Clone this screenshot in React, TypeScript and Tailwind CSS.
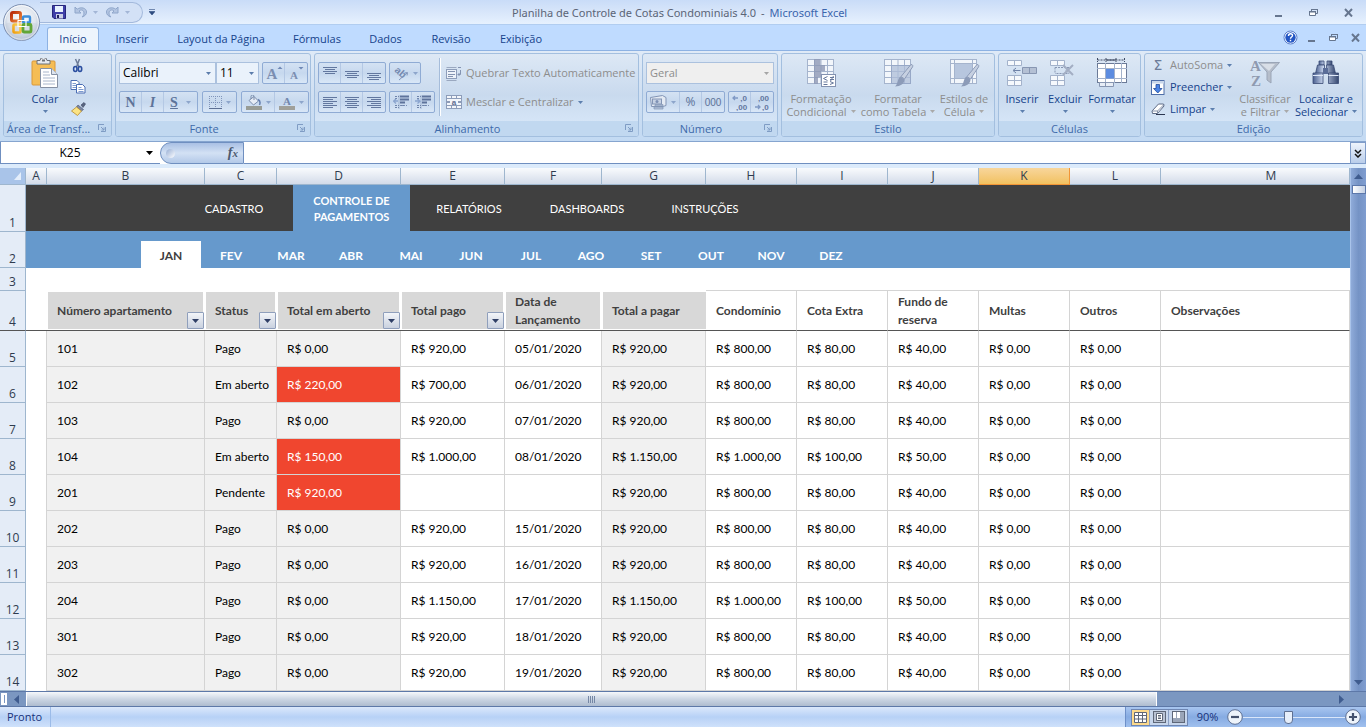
import { useState, type ReactNode } from "react";
import clsx from "clsx";

type Row = {
  apto: string;
  status: string;
  aberto: string;
  pago: string;
  data: string;
  total: string;
  condominio: string;
  extra: string;
  reserva: string;
};

const rows: Row[] = [
  { apto: "101", status: "Pago", aberto: "R$ 0,00", pago: "R$ 920,00", data: "05/01/2020", total: "R$ 920,00", condominio: "R$ 800,00", extra: "R$ 80,00", reserva: "R$ 40,00" },
  { apto: "102", status: "Em aberto", aberto: "R$ 220,00", pago: "R$ 700,00", data: "06/01/2020", total: "R$ 920,00", condominio: "R$ 800,00", extra: "R$ 80,00", reserva: "R$ 40,00" },
  { apto: "103", status: "Pago", aberto: "R$ 0,00", pago: "R$ 920,00", data: "07/01/2020", total: "R$ 920,00", condominio: "R$ 800,00", extra: "R$ 80,00", reserva: "R$ 40,00" },
  { apto: "104", status: "Em aberto", aberto: "R$ 150,00", pago: "R$ 1.000,00", data: "08/01/2020", total: "R$ 1.150,00", condominio: "R$ 1.000,00", extra: "R$ 100,00", reserva: "R$ 50,00" },
  { apto: "201", status: "Pendente", aberto: "R$ 920,00", pago: "", data: "", total: "R$ 920,00", condominio: "R$ 800,00", extra: "R$ 80,00", reserva: "R$ 40,00" },
  { apto: "202", status: "Pago", aberto: "R$ 0,00", pago: "R$ 920,00", data: "15/01/2020", total: "R$ 920,00", condominio: "R$ 800,00", extra: "R$ 80,00", reserva: "R$ 40,00" },
  { apto: "203", status: "Pago", aberto: "R$ 0,00", pago: "R$ 920,00", data: "16/01/2020", total: "R$ 920,00", condominio: "R$ 800,00", extra: "R$ 80,00", reserva: "R$ 40,00" },
  { apto: "204", status: "Pago", aberto: "R$ 0,00", pago: "R$ 1.150,00", data: "17/01/2020", total: "R$ 1.150,00", condominio: "R$ 1.000,00", extra: "R$ 100,00", reserva: "R$ 50,00" },
  { apto: "301", status: "Pago", aberto: "R$ 0,00", pago: "R$ 920,00", data: "18/01/2020", total: "R$ 920,00", condominio: "R$ 800,00", extra: "R$ 80,00", reserva: "R$ 40,00" },
  { apto: "302", status: "Pago", aberto: "R$ 0,00", pago: "R$ 920,00", data: "19/01/2020", total: "R$ 920,00", condominio: "R$ 800,00", extra: "R$ 80,00", reserva: "R$ 40,00" },
];

const columns = [
  { letter: "A", width: "w-[21px]" },
  { letter: "B", width: "w-[158px]" },
  { letter: "C", width: "w-[72px]" },
  { letter: "D", width: "w-[124px]" },
  { letter: "E", width: "w-[104px]" },
  { letter: "F", width: "w-[97px]" },
  { letter: "G", width: "w-[104px]" },
  { letter: "H", width: "w-[91px]" },
  { letter: "I", width: "w-[91px]" },
  { letter: "J", width: "w-[91px]" },
  { letter: "K", width: "w-[91px]" },
  { letter: "L", width: "w-[91px]" },
  { letter: "M", width: "" },
];

const headers = [
  { label: "Número apartamento", gray: true, filter: true },
  { label: "Status", gray: true, filter: true },
  { label: "Total em aberto", gray: true, filter: true },
  { label: "Total pago", gray: true, filter: true },
  { label: "Data de Lançamento", gray: true },
  { label: "Total a pagar", gray: true, last: true },
  { label: "Condomínio" },
  { label: "Cota Extra" },
  { label: "Fundo de reserva" },
  { label: "Multas" },
  { label: "Outros" },
  { label: "Observações" },
];

const tabs = [
  { label: "Início", width: "w-[52px]" },
  { label: "Inserir", width: "w-[66px]" },
  { label: "Layout da Página", width: "w-[112px]" },
  { label: "Fórmulas", width: "w-[80px]" },
  { label: "Dados", width: "w-[57px]" },
  { label: "Revisão", width: "w-[74px]" },
  { label: "Exibição", width: "w-[66px]" },
];
const sections = ["CADASTRO", "CONTROLE DE PAGAMENTOS", "RELATÓRIOS", "DASHBOARDS", "INSTRUÇÕES"];
const months = ["JAN", "FEV", "MAR", "ABR", "MAI", "JUN", "JUL", "AGO", "SET", "OUT", "NOV", "DEZ"];

/* ---------- icons ---------- */

function Caret({ className = "text-[#5d7fae]" }: { className?: string }) {
  return (
    <svg width="5" height="3" viewBox="0 0 5 3" className={clsx("shrink-0", className)}>
      <path d="M0 0h5L2.5 3z" fill="currentColor" />
    </svg>
  );
}

function OfficeLogo() {
  return (
    <svg width="39" height="39" viewBox="0 0 39 39">
      <defs>
        <radialGradient id="orb" cx="50%" cy="40%" r="60%">
          <stop offset="0" stopColor="#ffffff" />
          <stop offset="0.65" stopColor="#dfe5ee" />
          <stop offset="1" stopColor="#9fb0ca" />
        </radialGradient>
        <linearGradient id="lred" x1="0" y1="0" x2="1" y2="1">
          <stop offset="0" stopColor="#b8290a" />
          <stop offset="1" stopColor="#f08a3a" />
        </linearGradient>
        <linearGradient id="lyellow" x1="0" y1="1" x2="1" y2="0">
          <stop offset="0" stopColor="#f0a010" />
          <stop offset="1" stopColor="#fbd75c" />
        </linearGradient>
      </defs>
      <circle cx="19.5" cy="19.5" r="18" fill="url(#orb)" stroke="#7d90b2" />
      <circle cx="19.5" cy="19.5" r="16.8" fill="none" stroke="#fff" strokeOpacity=".8" />
      <path d="M3 21c8-3 24-3 33 0a16.500 16.500 0 0 1-33 0z" fill="#c9d1de" opacity=".5" />
      <g fill="none" strokeLinejoin="round">
        <rect x="9.500" y="9.500" width="9" height="8.500" rx="1.500" stroke="url(#lred)" strokeWidth="3" />
        <rect x="21" y="13.500" width="7" height="6" rx="1" stroke="#3c8edb" strokeWidth="2.400" />
        <rect x="11.500" y="21.500" width="7" height="8" rx="1" stroke="url(#lyellow)" strokeWidth="2.600" />
        <rect x="21" y="21.500" width="8" height="7.500" rx="1" stroke="#62a637" strokeWidth="2.800" />
        <path d="M16 17.500h8v6h-8z" stroke="#fff" strokeWidth="1.200" />
      </g>
    </svg>
  );
}

function SaveIcon() {
  return (
    <svg width="14" height="14" viewBox="0 0 14 14">
      <path d="M.5.500h13v13H2L.500 12z" fill="#3f3fa8" stroke="#26267c" />
      <rect x="3" y="1" width="8" height="6" fill="#e8f2ff" />
      <rect x="4" y="9" width="7" height="4.500" fill="#c9cfe6" />
      <rect x="5" y="10" width="2" height="3" fill="#20205c" />
    </svg>
  );
}

function UndoIcon({ flip }: { flip?: boolean }) {
  return (
    <svg width="13" height="12" viewBox="0 0 13 12" className={clsx(flip && "-scale-x-100")}>
      <path d="M1 1v6h6L5 5c2-2 5-1 5 2 0 2-1 3-2 4 3-1 4.500-2.500 4.500-5C12.500 2 7 .500 3.200 3.200z" fill="#b3c5e2" stroke="#8fa6ca" />
    </svg>
  );
}

function MinimizeIcon() {
  return (
    <svg width="9" height="9" viewBox="0 0 9 9">
      <path d="M1 7h7v2H1z" fill="#66768f" />
    </svg>
  );
}

function RestoreIcon() {
  return (
    <svg width="9" height="9" viewBox="0 0 9 9">
      <path d="M2.500 3V1.500h6v4H7" fill="none" stroke="#66768f" />
      <path d="M.500 3.500h6v4h-6z" fill="#fff" stroke="#66768f" />
      <path d="M0 3h7v1.500H0zM2 1h7v1H2z" fill="#66768f" />
    </svg>
  );
}

function CloseIcon() {
  return (
    <svg width="9" height="9" viewBox="0 0 9 9">
      <path d="M1 1l7 7.500M8 1L1 8.500" stroke="#66768f" strokeWidth="2" />
    </svg>
  );
}

function HelpIcon() {
  return (
    <svg width="15" height="15" viewBox="0 0 15 15">
      <circle cx="7.500" cy="7.500" r="6.500" fill="#fff" stroke="#5b7fcb" />
      <circle cx="7.500" cy="7.500" r="5.200" fill="#2356c4" />
      <path d="M5.500 6c0-3 4-3 4-.500 0 1.500-2 1.500-2 3.200M7.500 9.800v1.400" fill="none" stroke="#fff" strokeWidth="1.400" />
    </svg>
  );
}

function PasteIcon() {
  return (
    <svg width="28" height="30" viewBox="0 0 28 30">
      <rect x="1" y="3" width="23" height="24" rx="1" fill="#f5bd55" stroke="#d9983a" />
      <path d="M6 2.500h3a3.500 3 0 0 1 7 0h3v3.500H6z" fill="#e6e9ee" stroke="#6b7078" />
      <rect x="11" y="1.500" width="3" height="2" fill="#6b7078" />
      <path d="M9.500 10.500h11l6 6v13h-17z" fill="#fff" stroke="#8590a3" />
      <path d="M20.500 10.500v6h6" fill="#dde4ee" stroke="#8590a3" />
      <path d="M12 14h6M12 17h7M12 20h12M12 23h12M12 26h12" stroke="#a9b6cb" />
    </svg>
  );
}

function CutIcon() {
  return (
    <svg width="12" height="15" viewBox="0 0 12 15">
      <path d="M3.500 1l3.500 8M7.500 1L4.500 9" stroke="#6d7c98" strokeWidth="1.500" />
      <ellipse cx="3.300" cy="11" rx="1.700" ry="2.500" fill="none" stroke="#2b4fa0" strokeWidth="1.600" />
      <ellipse cx="8" cy="11" rx="1.700" ry="2.500" fill="none" stroke="#2b4fa0" strokeWidth="1.600" />
    </svg>
  );
}

function CopyIcon() {
  return (
    <svg width="16" height="14" viewBox="0 0 16 14">
      <path d="M1 .500h6l2 2v7H1z" fill="#fff" stroke="#4a6db3" />
      <path d="M2.500 3.500H6M2.500 5.500H6M2.500 7.500H6" stroke="#7d9bd0" />
      <path d="M6.500 4.500h6l2.500 2.500v6H6.500z" fill="#fff" stroke="#4a6db3" />
      <path d="M8.500 7.500h3M8.500 9.500h5M8.500 11.500h5" stroke="#7d9bd0" />
    </svg>
  );
}

function BrushIcon() {
  return (
    <svg width="15" height="14" viewBox="0 0 15 14">
      <path d="M10 3l3-2.500 1.500 1.500L12 5.500z" fill="#5a6680" stroke="#394461" strokeWidth=".6" />
      <path d="M7 3l5.500 4.500-2 1.500L5.500 5z" fill="#7b87a5" stroke="#46506b" strokeWidth=".6" />
      <path d="M5.500 5l5 4-4 4.500L.500 9z" fill="#fbe384" stroke="#b88a2a" strokeWidth=".8" />
    </svg>
  );
}

type AlignKind = "top" | "middle" | "bottom" | "left" | "center" | "right";

const alignPaths: Record<AlignKind, string> = {
  top: "M0 .5h14M2 2.500h10M0 4.500h14M2 6.500h10",
  middle: "M0 4.500h14M2 6.500h10M0 8.500h14M2 10.500h10",
  bottom: "M0 6.500h14M2 8.500h10M0 10.500h14M2 12.500h10",
  left: "M0 1.500h14M0 3.500h10M0 5.500h14M0 7.500h10M0 9.500h14M0 11.500h10",
  center: "M0 1.500h14M2 3.500h10M0 5.500h14M2 7.500h10M0 9.500h14M2 11.500h10",
  right: "M0 1.500h14M4 3.500h10M0 5.500h14M4 7.500h10M0 9.500h14M4 11.500h10",
};

function AlignIcon({ kind }: { kind: AlignKind }) {
  return (
    <svg width="14" height="13" viewBox="0 0 14 13">
      <path d={alignPaths[kind]} stroke="#62779f" />
    </svg>
  );
}

function IndentIcon({ more }: { more?: boolean }) {
  return (
    <svg width="16" height="14" viewBox="0 0 16 14">
      <path d="M2 1.500h4M2 10.500h4M2 12.500h4M7 10.500h4M2 3.500h2" stroke="#6f84aa" strokeDasharray="2 1" />
      <path d="M7 1.500h9M7 4.500h9M7 7.500h5" stroke="#5e739b" strokeWidth="2" />
      <path d="M7 10.500h7M6 .500v13" stroke="#7a8eb3" strokeDasharray="1 1" />
      <path d={more ? "M0 6h4M2.500 4l2.500 2.200L2.500 8.500" : "M1 6h4M3 4L.500 6.200 3 8.500"} stroke="#8ba5cf" fill="none" strokeWidth="1.300" />
    </svg>
  );
}

function OrientationIcon() {
  return (
    <svg width="16" height="16" viewBox="0 0 16 16">
      <text x="0" y="0" transform="translate(1 6) rotate(42)" fontSize="10" fontWeight="bold" fontFamily="Liberation Sans" fill="#7288af">ab</text>
      <path d="M6 15l8-7M14.500 7.500L14 10.500M14.500 7.500L11.500 8" stroke="#7f95bb" fill="none" />
    </svg>
  );
}

function WrapIcon() {
  return (
    <svg width="16" height="15" viewBox="0 0 16 15">
      <path d="M.500 1.500h10M.500 14.500h10" stroke="#9aa8c0" />
      <rect x=".5" y="3.500" width="10" height="9" fill="#eef3fa" stroke="#8d9dba" />
      <path d="M2 5.500h7M2 8.500h7M2 10.500h5" stroke="#8393b1" />
      <path d="M12 1.500h3M14.500 4v4.500H12M13.500 7L12 8.500l1.500 1.500" stroke="#8393b1" fill="none" />
    </svg>
  );
}

function MergeIcon() {
  return (
    <svg width="16" height="14" viewBox="0 0 16 14">
      <rect x=".5" y=".5" width="15" height="13" fill="#f3f6fb" stroke="#8d9dba" />
      <path d="M0 3.500h16M0 10.500h16M5.500 0v3.500M10.500 0v3.500M5.500 10.500V14M10.500 10.500V14" stroke="#8d9dba" />
      <path d="M1 7h3M15 7h-3" stroke="#6d7fa2" strokeWidth="1.500" />
      <text x="8" y="9.500" textAnchor="middle" fontSize="8" fontWeight="bold" fontFamily="Liberation Sans" fill="#5f6f90">a</text>
    </svg>
  );
}

function BorderIcon() {
  return (
    <svg width="13" height="13" viewBox="0 0 13 13">
      <path d="M0 .5h13M0 6.500h13M.500 0v12M6.500 0v12M12.500 0v12" stroke="#8095bb" strokeDasharray="1 1" />
      <path d="M0 12.500h13" stroke="#5c6f94" />
    </svg>
  );
}

function FillIcon() {
  return (
    <svg width="16" height="15" viewBox="0 0 16 15">
      <path d="M3 5.500l5-4 4.500 4.500-5 4z" fill="#e6ecf5" stroke="#7a8cab" />
      <path d="M8 5V1.500a1.500 1.500 0 0 0-3 0V4" fill="none" stroke="#7a8cab" />
      <path d="M12 4.500c2 1 2.500 3 1.500 5.500" stroke="#6580b0" strokeWidth="1.500" fill="none" />
      <rect y="11" width="16" height="4" fill="#989c96" />
    </svg>
  );
}

function FontColorIcon() {
  return (
    <svg width="16" height="15" viewBox="0 0 16 15">
      <text x="8" y="10" textAnchor="middle" fontSize="11" fontWeight="bold" fontFamily="Liberation Serif" fill="#7287ad">A</text>
      <rect y="11" width="16" height="4" fill="#a0a09a" />
    </svg>
  );
}

function FontSizeIcon({ grow }: { grow?: boolean }) {
  return (
    <svg width="18" height="20" viewBox="0 0 18 20">
      <text x="7" y="16" textAnchor="middle" fontSize={grow ? 15 : 11} fontWeight="bold" fontFamily="Liberation Serif" fill="#7b8eb1">A</text>
      <path d={grow ? "M12.500 6h5L15 3.500z" : "M11.500 4h5L14 6.500z"} fill="#7089b6" />
    </svg>
  );
}

function MoneyIcon() {
  return (
    <svg width="17" height="15" viewBox="0 0 17 15">
      <path d="M.500 2.500l12-2 3.500 2v8l-3 1H1.500z" fill="#e4eaf3" stroke="#8395b5" />
      <rect x="2.500" y="4" width="9" height="5" fill="#c6d1e3" stroke="#8395b5" />
      <circle cx="7" cy="6.500" r="1.500" fill="#7d90b4" />
      <path d="M5 9.500h8v1.500H5zM4 12h9v2H4z" fill="#b4c2d9" stroke="#8395b5" strokeWidth=".7" />
    </svg>
  );
}

function DecimalIcon({ more }: { more?: boolean }) {
  return (
    <svg width="18" height="18" viewBox="0 0 18 18" fontFamily="Liberation Sans" fontSize="8" fontWeight="bold" fill="#62779f">
      <text x="16" y="8" textAnchor="end">{more ? ",0" : ",00"}</text>
      <text x={more ? 5 : 9} y="17">{more ? ",00" : ",0"}</text>
      <path d={more ? "M7 5H2M4 3L2 5l2 2" : "M2 14h5M5 12l2 2-2 2"} stroke="#7f98c4" fill="none" strokeWidth="1.300" />
    </svg>
  );
}

function GridIcon({ kind }: { kind: "conditional" | "table" | "style" }) {
  return (
    <svg width="32" height="30" viewBox="0 0 32 30">
      <rect x="2.500" y="1.500" width="26" height="24" fill="#f2f6fb" stroke="#a5b4cd" />
      {kind !== "style" && (
        <path d="M2 7.500h27M2 13.500h27M2 19.500h27M9.500 1v25M16 1v25M22.500 1v25" stroke="#a5b4cd" />
      )}
      {kind === "conditional" && (
        <>
          <path d="M9 1h6.500v6H20v6h-4v6h-3v7H9z" fill="#8d99b5" opacity=".8" />
          <rect x="16.500" y="16.500" width="14" height="12" fill="#fff" stroke="#8392b0" />
          <path d="M22.500 18.500l-4 2 4 2M18.500 24h4M18.500 26.500h4M25 19.500h4M25 21.500h4M28.500 18l-3 5M25 23.500l3.500 1.500-3.500 1.500" stroke="#66789c" fill="none" />
        </>
      )}
      {kind === "table" && <rect x="9.500" y="7.500" width="19" height="18" fill="#adbdd8" stroke="#93a5c5" opacity=".75" />}
      {kind === "style" && (
        <>
          <path d="M2 5.500h27M2 20.500h27M6.500 1v25M24.500 1v25" stroke="#a5b4cd" />
          <rect x="7" y="6" width="17" height="14" fill="#b7c6de" />
        </>
      )}
      {kind !== "conditional" && (
        <>
          <path d="M29 6.500c2 0 2 1.500 1.500 2.500L22.500 21 19 18.500z" fill="#c6d0e1" stroke="#8d9cb9" />
          <path d="M18.500 18.500l4 3c0 4-4 7-9.500 7 3-2 2.500-8.500 5.500-10z" fill="#8c9bb8" />
        </>
      )}
    </svg>
  );
}

function CellsIcon({ kind }: { kind: "insert" | "delete" }) {
  return (
    <svg width="32" height="30" viewBox="0 0 32 30">
      <path d="M1.500 2.500h14v5h-14zM8.500 2.500v5M1.500 17.500h14v10h-14zM1.500 22.500h14M8.500 17.500v10" fill="#f6f9fd" stroke="#a3b2cb" />
      {kind === "insert" ? (
        <>
          <path d="M16.500 9.500h14v6h-14zM23.500 9.500v6" fill="#b4c0d4" stroke="#8796b2" />
          <path d="M14.500 12.500h-7M10 10l-3 2.500 3 2.500" stroke="#6f83a8" fill="none" />
        </>
      ) : (
        <>
          <path d="M6 9.500h14l-3 3 3 3H6M6 9.500v6" stroke="#8796b2" fill="none" strokeDasharray="2 1" />
          <path d="M14 7l10 10M24 7L14 17" stroke="#a3aec3" strokeWidth="2" />
        </>
      )}
    </svg>
  );
}

function FormatIcon() {
  return (
    <svg width="32" height="30" viewBox="0 0 32 30">
      <path d="M1.500 0v4M28.500 0v4M1.500 2h27M10 0v4M20 0v4" stroke="#3e4a63" strokeDasharray="2 1" />
      <path d="M10 2h10" stroke="#3e4a63" />
      <rect x="1.500" y="5.500" width="29" height="19" fill="#fff" stroke="#6b7a97" />
      <path d="M1 10.500h30M1 20.500h30M9.500 5v20M18.500 5v20M25.500 5v20" stroke="#a3b2cb" />
      <path d="M3.500 24.500h14v4h-14zM9.500 24.500v4" fill="#e8eef7" stroke="#8796b2" />
      <rect x="10" y="11" width="8" height="9.500" fill="#5c8ce0" />
    </svg>
  );
}

function FillDownIcon() {
  return (
    <svg width="14" height="15" viewBox="0 0 14 15">
      <rect x=".5" y=".5" width="12.500" height="14" fill="#fff" stroke="#4e6ea8" />
      <rect x="1" y="1" width="12" height="2.500" fill="#c8d6ea" />
      <path d="M5 4.500h3.500v4H11l-4.200 4.500L2.500 8.500H5z" fill="#4a83e4" stroke="#214c9e" strokeWidth=".8" />
    </svg>
  );
}

function EraserIcon() {
  return (
    <svg width="14" height="12" viewBox="0 0 14 12">
      <path d="M1 8l6.500-7h5L13 3l-6.500 7.500h-5z" fill="#fff" stroke="#5c6a85" />
      <path d="M1 8h5.500L13 1.500M6.500 8v2.500" fill="none" stroke="#8592aa" />
      <path d="M5 11.500h9" stroke="#2c3650" />
    </svg>
  );
}

function SortFilterIcon() {
  return (
    <svg width="32" height="30" viewBox="0 0 32 30">
      <path d="M9.500 4.500h21L22 14v11l-4-3v-8z" fill="#b5bdca" stroke="#9aa5b7" />
      <path d="M12 6h14l-6 7z" fill="#d8dee7" />
      <text x="1" y="13" fontFamily="Liberation Serif" fontSize="15" fontWeight="bold" fill="#8f9ab0">A</text>
      <text x="2" y="28" fontFamily="Liberation Serif" fontSize="15" fontWeight="bold" fill="#8f9ab0">Z</text>
    </svg>
  );
}

function BinocularsIcon() {
  return (
    <svg width="32" height="30" viewBox="0 0 32 30">
      <defs>
        <linearGradient id="bino" x1="0" x2="1" y1="0" y2="0">
          <stop offset="0" stopColor="#4a5f8f" />
          <stop offset=".4" stopColor="#c9d6ee" />
          <stop offset="1" stopColor="#34466f" />
        </linearGradient>
      </defs>
      <g stroke="#384a74" strokeWidth=".8" fill="url(#bino)">
        <path d="M9 3h5v4H9zM17 3h5v4h-5z" />
        <path d="M7.500 7h7v8.500h-9zM16.500 7h7l2 8.500h-9z" />
        <path d="M3 15h10v10.500H3zM18.500 15h10v10.500h-10z" />
      </g>
      <rect x="13" y="10" width="5" height="6" fill="#5a6d98" />
      <path d="M3 17.500h10M18.500 17.500h10" stroke="#dfe8f8" />
    </svg>
  );
}

function Launcher() {
  return (
    <svg width="8" height="8" viewBox="0 0 8 8">
      <path d="M.5 6V.500H6M7.500 3v4.500H3M3 3l3 3M6 3.500V6H3.500" fill="none" stroke="#7f9cc4" />
    </svg>
  );
}

/* ---------- ribbon parts ---------- */

function Group({ title, width, launcher, children }: { title: string; width: string; launcher?: boolean; children: ReactNode }) {
  return (
    <section
      aria-label={title}
      className={clsx(
        "flex h-[84px] shrink-0 flex-col overflow-hidden rounded-[3px] border border-[#a3bfdf] bg-linear-to-b from-[#dde8f5] via-[#c9daee] to-[#dcebfb]",
        width,
      )}
    >
      <div className="flex h-[67px] items-start">{children}</div>
      <div
        className={clsx(
          "relative flex h-[15px] items-center justify-center whitespace-nowrap bg-[#c1d8f0] leading-[15px] text-[#3e6aaa]",
          launcher && "pr-[18px]",
        )}
      >
        <span>{title}</span>
        {launcher && (
          <button aria-label={`Opções de ${title}`} className="absolute right-[5px] top-[3px]">
            <Launcher />
          </button>
        )}
      </div>
    </section>
  );
}

function ButtonSet({ children }: { children: ReactNode }) {
  return (
    <div className="flex h-[22px] divide-x divide-[#b4c8e4] rounded-[2px] border border-[#8fabd4] bg-linear-to-b from-[#d4e2f3] via-[#c6d8ee] to-[#d9e7f7]">
      {children}
    </div>
  );
}

function IconButton({ label, width = "w-[22px]", caret, children }: { label: string; width?: string; caret?: boolean; children: ReactNode }) {
  return (
    <button aria-label={label} className={clsx("flex items-center justify-center gap-1", width)}>
      {children}
      {caret && <Caret className="text-[#8da5cb]" />}
    </button>
  );
}

function Combo({ label, value, width, disabled }: { label: string; value: string; width: string; disabled?: boolean }) {
  return (
    <div className={clsx("relative h-[22px]", width)}>
      <select
        aria-label={label}
        disabled={disabled}
        className={clsx(
          "h-full w-full appearance-none border border-[#abc1de] pl-[3px]",
          disabled ? "bg-[#efefef] text-[11px] text-[#8d8d8d] opacity-100" : "bg-[#eaf2fb] text-[12px] text-black",
        )}
      >
        <option>{value}</option>
      </select>
      <Caret className={clsx("pointer-events-none absolute right-[5px] top-[10px]", disabled ? "text-[#a5a5a5]" : "text-[#5b7cab]")} />
    </div>
  );
}

function BigButton({ icon, lines, width, disabled }: { icon: ReactNode; lines: string[]; width: string; disabled?: boolean }) {
  return (
    <button
      className={clsx("flex h-[67px] shrink-0 flex-col items-center whitespace-nowrap pt-1 leading-[13px]", width, disabled ? "text-[#8d8d8d]" : "text-[#15428b]")}
    >
      {icon}
      <span className="mt-1">{lines[0]}</span>
      <span className="flex h-[13px] items-center gap-1">
        {lines[1]}
        <Caret className={disabled ? "text-[#a9a9a9]" : undefined} />
      </span>
    </button>
  );
}

function SmallButton({ icon, label, disabled, caret = true }: { icon: ReactNode; label: string; disabled?: boolean; caret?: boolean }) {
  return (
    <button className={clsx("flex h-[22px] items-center gap-1 whitespace-nowrap", disabled ? "text-[#8d8d8d]" : "text-[#15428b]")}>
      <span className="flex w-4 justify-center">{icon}</span>
      {label}
      {caret && <Caret />}
    </button>
  );
}

function Ribbon() {
  return (
    <div className="flex h-[92px] gap-[3px] overflow-hidden border-b border-t border-b-[#86a5cf] border-t-[#8db2e3] bg-linear-to-b from-[#dfeaf7] via-[#cfdff2] to-[#c3daf3] px-[3px] pt-[2px]">
      <Group title="Área de Transf..." width="w-[109px]" launcher>
        <div className="flex pl-4">
          <BigButton width="w-[50px]" icon={<PasteIcon />} lines={["Colar", ""]} />
          <div className="flex flex-col">
            <button aria-label="Recortar" className="flex h-[22px] w-4 items-center justify-center"><CutIcon /></button>
            <button aria-label="Copiar" className="flex h-[22px] w-4 items-center justify-center"><CopyIcon /></button>
            <button aria-label="Pincel" className="flex h-[22px] w-4 items-center justify-center"><BrushIcon /></button>
          </div>
        </div>
      </Group>

      <Group title="Fonte" width="w-[196px]" launcher>
        <div className="flex flex-col gap-[7px] pl-[3px] pt-2">
          <div className="flex">
            <Combo label="Fonte" value="Calibri" width="w-[97px]" />
            <Combo label="Tamanho" value="11" width="w-[43px]" />
            <div className="ml-[3px]">
              <ButtonSet>
                <IconButton label="Aumentar fonte"><FontSizeIcon grow /></IconButton>
                <IconButton label="Diminuir fonte"><FontSizeIcon /></IconButton>
              </ButtonSet>
            </div>
          </div>
          <div className="flex gap-1 text-[#5d7399]">
            <ButtonSet>
              <IconButton label="Negrito"><b className="font-['Liberation_Serif',serif] text-[14px]">N</b></IconButton>
              <IconButton label="Itálico"><i className="font-['Liberation_Serif',serif] text-[14px] font-bold">I</i></IconButton>
              <IconButton label="Sublinhado" width="w-[33px]" caret><u className="pr-1 font-['Liberation_Serif',serif] text-[14px] font-bold">S</u></IconButton>
            </ButtonSet>
            <ButtonSet>
              <IconButton label="Bordas" width="w-[33px]" caret><BorderIcon /></IconButton>
            </ButtonSet>
            <ButtonSet>
              <IconButton label="Cor de preenchimento" width="w-[33px]" caret><FillIcon /></IconButton>
              <IconButton label="Cor da fonte" width="w-[33px]" caret><FontColorIcon /></IconButton>
            </ButtonSet>
          </div>
        </div>
      </Group>

      <Group title="Alinhamento" width="w-[325px]" launcher>
        <div className="flex flex-col gap-[7px] pl-[3px] pt-2">
          <div className="flex gap-[3px]">
            <ButtonSet>
              <IconButton label="Alinhar em cima"><AlignIcon kind="top" /></IconButton>
              <IconButton label="Alinhar no meio"><AlignIcon kind="middle" /></IconButton>
              <IconButton label="Alinhar embaixo"><AlignIcon kind="bottom" /></IconButton>
            </ButtonSet>
            <ButtonSet>
              <IconButton label="Orientação" width="w-[30px]" caret><OrientationIcon /></IconButton>
            </ButtonSet>
          </div>
          <div className="flex gap-[3px]">
            <ButtonSet>
              <IconButton label="Alinhar à esquerda"><AlignIcon kind="left" /></IconButton>
              <IconButton label="Centralizar"><AlignIcon kind="center" /></IconButton>
              <IconButton label="Alinhar à direita"><AlignIcon kind="right" /></IconButton>
            </ButtonSet>
            <ButtonSet>
              <IconButton label="Diminuir recuo"><IndentIcon /></IconButton>
              <IconButton label="Aumentar recuo"><IndentIcon more /></IconButton>
            </ButtonSet>
          </div>
        </div>
        <div className="ml-1 mt-1 h-[58px] w-[2px] border-l border-[#a5bcda] bg-white" />
        <div className="flex flex-col gap-[7px] pl-[5px] pt-2">
          <SmallButton icon={<WrapIcon />} label="Quebrar Texto Automaticamente" disabled caret={false} />
          <SmallButton icon={<MergeIcon />} label="Mesclar e Centralizar" disabled />
        </div>
      </Group>

      <Group title="Número" width="w-[136px]" launcher>
        <div className="flex flex-col gap-[7px] pl-[3px] pt-2">
          <Combo label="Formato de número" value="Geral" width="w-[128px]" disabled />
          <div className="flex justify-between text-[#5d7399]">
            <ButtonSet>
              <IconButton label="Formato de contabilização" width="w-[33px]" caret><MoneyIcon /></IconButton>
              <IconButton label="Porcentagem"><span className="text-[12px]">%</span></IconButton>
              <IconButton label="Separador de milhares"><span className="font-['Liberation_Sans',sans-serif] text-[10px]">000</span></IconButton>
            </ButtonSet>
            <ButtonSet>
              <IconButton label="Aumentar casas decimais"><DecimalIcon more /></IconButton>
              <IconButton label="Diminuir casas decimais"><DecimalIcon /></IconButton>
            </ButtonSet>
          </div>
        </div>
      </Group>

      <Group title="Estilo" width="w-[214px]">
        <BigButton width="w-[78px]" icon={<GridIcon kind="conditional" />} lines={["Formatação", "Condicional"]} disabled />
        <BigButton width="w-[76px]" icon={<GridIcon kind="table" />} lines={["Formatar", "como Tabela"]} disabled />
        <BigButton width="w-[56px]" icon={<GridIcon kind="style" />} lines={["Estilos de", "Célula"]} disabled />
      </Group>

      <Group title="Células" width="w-[143px]">
        <BigButton width="w-[46px]" icon={<CellsIcon kind="insert" />} lines={["Inserir", ""]} />
        <BigButton width="w-[40px]" icon={<CellsIcon kind="delete" />} lines={["Excluir", ""]} />
        <BigButton width="w-[54px]" icon={<FormatIcon />} lines={["Formatar", ""]} />
      </Group>

      <Group title="Edição" width="w-[219px]">
        <div className="flex w-[90px] flex-col pl-[5px]">
          <SmallButton icon={<span className="font-['DejaVu_Sans',sans-serif] text-[14px] text-[#6c7c99]">Σ</span>} label="AutoSoma" disabled />
          <SmallButton icon={<FillDownIcon />} label="Preencher" />
          <SmallButton icon={<EraserIcon />} label="Limpar" />
        </div>
        <BigButton width="w-[60px]" icon={<SortFilterIcon />} lines={["Classificar", "e Filtrar"]} disabled />
        <BigButton width="w-[62px]" icon={<BinocularsIcon />} lines={["Localizar e", "Selecionar"]} />
      </Group>
    </div>
  );
}

/* ---------- window chrome ---------- */

function TitleBar() {
  return (
    <header className="flex h-[25px] items-center border-b border-[#b1cdf0] bg-linear-to-b from-[#c9dcf8] via-[#d8e6fa] to-[#e6f1fe]">
      <div className="flex w-[512px] shrink-0 items-center pl-10">
        <div className="flex h-[21px] w-[103px] items-center rounded-r-full border border-l-0 border-[#a3b9dc] bg-[#d3e1f6] pl-3">
          <button aria-label="Salvar"><SaveIcon /></button>
          <button aria-label="Desfazer" className="ml-2 flex items-center gap-[6px]"><UndoIcon /><Caret className="text-[#a3b6d6]" /></button>
          <button aria-label="Refazer" className="ml-2 flex items-center gap-[6px]"><UndoIcon flip /><Caret className="text-[#a3b6d6]" /></button>
        </div>
        <button aria-label="Personalizar barra" className="ml-[6px]">
          <svg width="6" height="6" viewBox="0 0 6 6">
            <path d="M0 .500h6M0 2.500h6L3 6z" fill="#2d4c80" stroke="#2d4c80" strokeWidth=".6" />
          </svg>
        </button>
      </div>
      <h1 className="flex gap-[5px] whitespace-nowrap pt-[2px] font-['Noto_Sans',sans-serif] text-[#5b6577]">
        <span>Planilha de Controle de Cotas Condominiais 4.0</span>
        <span>-</span>
        <span className="text-[#3b65ad]">Microsoft Excel</span>
      </h1>
      <div className="ml-auto flex gap-[26px] pr-[13px]">
        <button aria-label="Minimizar"><MinimizeIcon /></button>
        <button aria-label="Restaurar"><RestoreIcon /></button>
        <button aria-label="Fechar"><CloseIcon /></button>
      </div>
    </header>
  );
}

function TabBar() {
  const [active, setActive] = useState("Início");
  return (
    <nav className="flex h-[25px] items-end bg-[#bfdbff] pl-[47px] text-[#15428b]">
      {tabs.map((tab) => (
        <button
          key={tab.label}
          onClick={() => setActive(tab.label)}
          className={clsx(
            "h-[23px] whitespace-nowrap rounded-t-[3px] border border-b-0 text-center",
            tab.width,
            active === tab.label ? "border-[#8db2e3] bg-[#edf4fc]" : "border-transparent",
          )}
        >
          {tab.label}
        </button>
      ))}
      <div className="ml-auto flex h-full items-center gap-[13px] pr-[6px]">
        <button aria-label="Ajuda" className="-mr-1"><HelpIcon /></button>
        <button aria-label="Minimizar pasta"><MinimizeIcon /></button>
        <button aria-label="Restaurar pasta"><RestoreIcon /></button>
        <button aria-label="Fechar pasta"><CloseIcon /></button>
      </div>
    </nav>
  );
}

function FormulaBar() {
  return (
    <div className="flex h-[26px] items-stretch border-b-4 border-[#dcebfb] bg-white">
      <div className="flex w-[160px] shrink-0 items-center border-b border-l border-[#6f8fc0]">
        <input aria-label="Caixa de nome" defaultValue="K25" className="w-[138px] bg-transparent text-center text-[12px] text-black outline-none" />
        <button aria-label="Abrir nomes" className="ml-[7px]">
          <svg width="7" height="4" viewBox="0 0 7 4"><path d="M0 0h7L3.500 4z" fill="#000" /></svg>
        </button>
      </div>
      <div className="flex w-[84px] shrink-0 items-center justify-between rounded-l-full border border-[#6f8fc0] bg-linear-to-b from-[#a9c0e4] via-[#d3e1f4] to-[#b3c9e8] px-[5px]">
        <span className="size-[9px] rounded-full bg-linear-to-br from-[#97aed4] to-white" />
        <button className="font-['Liberation_Serif',serif] text-[14px] font-bold italic leading-none text-[#4c5a70]">
          f<span className="text-[11px]">x</span>
        </button>
      </div>
      <input aria-label="Barra de fórmulas" className="min-w-0 flex-1 border-b border-[#6f8fc0] px-1 text-[12px] outline-none" />
      <button aria-label="Expandir barra de fórmulas" className="flex w-4 items-center justify-center border border-[#7f9cc9] bg-linear-to-b from-[#eef4fc] to-[#b9cdea]">
        <svg width="8" height="9" viewBox="0 0 8 9">
          <path d="M1 1l3 3 3-3M1 5l3 3 3-3" fill="none" stroke="#111" strokeWidth="1.500" />
        </svg>
      </button>
    </div>
  );
}

/* ---------- sheet ---------- */

function RowHeader({ n }: { n: number }) {
  return (
    <th
      scope="row"
      className={clsx(
        "border-b border-r border-[#9eb6ce] bg-[#e4ecf7] p-0 text-center align-bottom font-['Open_Sans',sans-serif] text-[12px] font-normal leading-[16px] text-[#2f3b4e]",
        n === 4 && "border-b-[#555555]",
      )}
    >
      {n}
    </th>
  );
}

function SheetHeader({ label, gray, filter, last }: { label: string; gray?: boolean; filter?: boolean; last?: boolean }) {
  return (
    <th
      scope="col"
      className={clsx("border-b border-b-[#555555] p-0 text-left text-[12px] font-bold leading-[18px] text-[#404040]", !gray && "border-r border-r-[#d4d4d4]")}
    >
      <div
        className={clsx(
          "relative flex h-[39px] items-center pl-[9px]",
          gray ? "border border-white bg-[#d8d8d8]" : "border-l border-transparent",
          gray && (last ? "border-r-0" : "border-r-2"),
        )}
      >
        <span className={clsx(filter ? "whitespace-nowrap" : "pr-3")}>{label}</span>
        {filter && (
          <button
            aria-label={`Filtrar ${label}`}
            className="absolute bottom-0 right-[-1px] flex size-[17px] items-center justify-center rounded-[1px] border border-[#8f9fbc] bg-linear-to-b from-[#f3f5f9] to-[#c9d1df]"
          >
            <svg width="7" height="4" viewBox="0 0 7 4"><path d="M0 0h7L3.500 4z" fill="#2f3f66" /></svg>
          </button>
        )}
      </div>
    </th>
  );
}

function Cell({ children, tone }: { children?: ReactNode; tone?: "gray" | "red" }) {
  return (
    <td
      className={clsx(
        "whitespace-nowrap border-b border-r border-[#d4d4d4] p-0 pl-[10px]",
        tone === "gray" && "bg-[#f1f1f1]",
        tone === "red" && "bg-[#f0462f] text-white",
      )}
    >
      {children}
    </td>
  );
}

function Sheet() {
  const [section, setSection] = useState("CONTROLE DE PAGAMENTOS");
  const [month, setMonth] = useState("JAN");

  return (
    <table className="w-full min-w-0 flex-1 table-fixed border-separate border-spacing-0 self-start bg-white font-['Lato',sans-serif] text-[12px] text-black">
      <colgroup>
        <col className="w-[26px]" />
        {columns.map((c) => (
          <col key={c.letter} className={c.width} />
        ))}
      </colgroup>
      <thead>
        <tr className="h-[17px] font-['Open_Sans',sans-serif] text-[12px] leading-[16px] text-[#2f3b4e]">
          <td className="border-b border-r border-[#9eb6ce] bg-[#a9c4e9] p-0">
            <svg width="7" height="8" viewBox="0 0 7 8" className="ml-auto mr-1">
              <path d="M7 0v8H0z" fill="#e4eefb" />
            </svg>
          </td>
          {columns.map((c) => (
            <th
              key={c.letter}
              scope="col"
              className={clsx(
                "border-b border-r p-0 text-center font-normal",
                c.letter === "M" && "pl-8",
                c.letter === "K"
                  ? "border-[#f29536] bg-linear-to-b from-[#f8d69b] to-[#f1c15f]"
                  : "border-[#9eb6ce] bg-linear-to-b from-[#f9fbfd] to-[#d3dbe9]",
              )}
            >
              {c.letter}
            </th>
          ))}
        </tr>
      </thead>
      <tbody>
        <tr className="h-[47px]">
          <RowHeader n={1} />
          <td colSpan={13} className="bg-[#6699cc] p-0 align-top">
            <div className="flex h-[46px] bg-[#404040] pl-[149px] text-[11px] text-white">
              {sections.map((s) => (
                <button
                  key={s}
                  onClick={() => setSection(s)}
                  className={clsx("px-3 pt-px leading-[16px]", s === section ? "w-[117px] bg-[#6699cc] font-bold" : "w-[118px]")}
                >
                  {s}
                </button>
              ))}
            </div>
          </td>
        </tr>
        <tr className="h-[36px]">
          <RowHeader n={2} />
          <td colSpan={13} className="bg-[#6699cc] p-0">
            <div className="flex h-[36px] items-end pl-[115px] font-bold">
              {months.map((m) => (
                <button
                  key={m}
                  onClick={() => setMonth(m)}
                  className={clsx("h-[27px] w-[60px] pt-[2px]", m === month ? "bg-white text-[#404040]" : "text-white")}
                >
                  {m}
                </button>
              ))}
            </div>
          </td>
        </tr>
        <tr className="h-[23px]">
          <RowHeader n={3} />
          <td colSpan={7} className="p-0" />
          <td colSpan={6} className="border-b border-[#d4d4d4] p-0" />
        </tr>
        <tr className="h-[40px]">
          <RowHeader n={4} />
          <td className="border-b border-[#555555] p-0" />
          {headers.map((h) => (
            <SheetHeader key={h.label} {...h} />
          ))}
        </tr>
        {rows.map((row, i) => (
          <tr key={row.apto} className="h-[36px]">
            <RowHeader n={i + 5} />
            <td className="border-r border-[#d4d4d4] p-0" />
            <Cell tone="gray">{row.apto}</Cell>
            <Cell tone="gray">{row.status}</Cell>
            <Cell tone={row.aberto === "R$ 0,00" ? "gray" : "red"}>{row.aberto}</Cell>
            <Cell>{row.pago}</Cell>
            <Cell>{row.data}</Cell>
            <Cell tone="gray">{row.total}</Cell>
            <Cell>{row.condominio}</Cell>
            <Cell>{row.extra}</Cell>
            <Cell>{row.reserva}</Cell>
            <Cell>R$ 0,00</Cell>
            <Cell>R$ 0,00</Cell>
            <Cell />
          </tr>
        ))}
      </tbody>
    </table>
  );
}

function VerticalScroll() {
  return (
    <div className="flex w-4 shrink-0 flex-col items-center border-l border-[#a9c3ea] bg-linear-to-r from-[#8fabd9] via-[#7593c5] to-[#7f9dd0]">
      <button aria-label="Rolar para cima" className="flex h-[17px] items-center">
        <svg width="9" height="5" viewBox="0 0 9 5"><path d="M0 5h9L4.500 0z" fill="#3f5c8f" /></svg>
      </button>
      <div className="h-[9px] w-[14px] border border-[#5c78ab] bg-linear-to-r from-white to-[#c2cfe4]" />
      <button aria-label="Rolar para baixo" className="mt-auto flex h-[18px] items-center">
        <svg width="9" height="5" viewBox="0 0 9 5"><path d="M0 0h9L4.500 5z" fill="#3f5c8f" /></svg>
      </button>
    </div>
  );
}

function HorizontalScroll() {
  return (
    <div className="flex h-4 items-stretch border-y border-[#5d78a8] bg-[#7b97c1]">
      <div className="my-px ml-px flex w-[6px] items-center justify-center bg-white">
        <span className="h-2 w-px bg-[#7b97c1]" />
      </div>
      <button aria-label="Rolar para a esquerda" className="flex w-[19px] items-center justify-center">
        <svg width="5" height="9" viewBox="0 0 5 9"><path d="M5 0v9L0 4.500z" fill="#3f5c8f" /></svg>
      </button>
      <div className="flex flex-1 items-center justify-center gap-px border-x border-white bg-linear-to-b from-[#f6f8fb] via-[#ccd6e4] to-[#aebccf]">
        {[0, 1, 2, 3].map((n) => (
          <span key={n} className="h-[7px] w-px bg-[#7587a5]" />
        ))}
      </div>
      <button aria-label="Rolar para a direita" className="flex w-[209px] items-center justify-end pr-[22px]">
        <svg width="5" height="9" viewBox="0 0 5 9"><path d="M0 0v9l5-4.500z" fill="#3f5c8f" /></svg>
      </button>
    </div>
  );
}

function ZoomButton({ plus }: { plus?: boolean }) {
  return (
    <button aria-label={plus ? "Mais zoom" : "Menos zoom"}>
      <svg width="16" height="16" viewBox="0 0 16 16">
        <circle cx="8" cy="8" r="7.300" fill="#eef4fb" stroke="#5e7093" />
        <path d={plus ? "M4 8h8M8 4v8" : "M4 8h8"} stroke="#46536e" strokeWidth="2.200" />
      </svg>
    </button>
  );
}

function StatusBar() {
  const [zoom, setZoom] = useState(90);
  return (
    <footer className="flex h-5 items-center bg-linear-to-b from-[#dbe8fb] via-[#b7d1f6] to-[#cfe1fb] text-[#15307a]">
      <div className="flex h-full w-[51px] items-center border-r border-[#9bbbe8] pl-[7px]">Pronto</div>
      <div className="ml-auto flex h-full items-center border-l border-[#6e90c8] bg-linear-to-b from-[#a9c6f0] via-[#86abe2] to-[#a0c0ee] pl-[5px]">
        <div className="flex h-[17px] items-stretch divide-x divide-[#8ba0c4] border border-[#6f87b3] bg-[#c7d6ec]">
          <button aria-label="Normal" className="flex w-[18px] items-center justify-center bg-[#fbd98c]">
            <svg width="13" height="11" viewBox="0 0 13 11">
              <path d="M.5.500h12v10H.500zM.500 3.500h12M.500 7h12M4.500.500v10M8.500.500v10" fill="#fff" stroke="#5e6778" />
            </svg>
          </button>
          <button aria-label="Layout da página" className="flex w-[19px] items-center justify-center">
            <svg width="13" height="12" viewBox="0 0 13 12">
              <rect x=".5" y=".5" width="12" height="11" fill="#b8c2d3" stroke="#5e6778" />
              <path d="M3.500 2.500h6v7h-6zM5 4.500h3M5 6h3M5 7.500h3" fill="#fff" stroke="#5e6778" />
            </svg>
          </button>
          <button aria-label="Quebra de página" className="flex w-[18px] items-center justify-center">
            <svg width="13" height="12" viewBox="0 0 13 12">
              <rect x=".5" y=".5" width="12" height="11" fill="#9aa5b8" stroke="#5e6778" />
              <path d="M1 1h3v6H1zM5 1h3v6H5z" fill="#fff" />
            </svg>
          </button>
        </div>
        <span className="w-[39px] text-center">{zoom}%</span>
        <ZoomButton />
        <input
          type="range"
          aria-label="Zoom"
          min={10}
          max={190}
          value={zoom}
          onChange={(e) => setZoom(Number(e.target.value))}
          className="h-4 w-[102px] appearance-none bg-[linear-gradient(#d9e6fa,#d9e6fa)] bg-[length:100%_1px] bg-center bg-no-repeat [&::-webkit-slider-thumb]:h-[13px] [&::-webkit-slider-thumb]:w-[9px] [&::-webkit-slider-thumb]:appearance-none [&::-webkit-slider-thumb]:rounded-b-[4px] [&::-webkit-slider-thumb]:border [&::-webkit-slider-thumb]:border-[#5e7093] [&::-webkit-slider-thumb]:bg-[#e6eefa]"
        />
        <ZoomButton plus />
        <span className="w-[5px]" />
      </div>
    </footer>
  );
}

export default function App() {
  return (
    <div className="relative flex min-h-screen w-full flex-col overflow-hidden bg-[#bfdbff] font-['Open_Sans',sans-serif] text-[11px]">
      <TitleBar />
      <TabBar />
      <Ribbon />
      <FormulaBar />
      <main className="flex">
        <Sheet />
        <VerticalScroll />
      </main>
      <HorizontalScroll />
      <StatusBar />
      <button aria-label="Botão Office" className="absolute left-[2px] top-[3px]">
        <OfficeLogo />
      </button>
    </div>
  );
}
